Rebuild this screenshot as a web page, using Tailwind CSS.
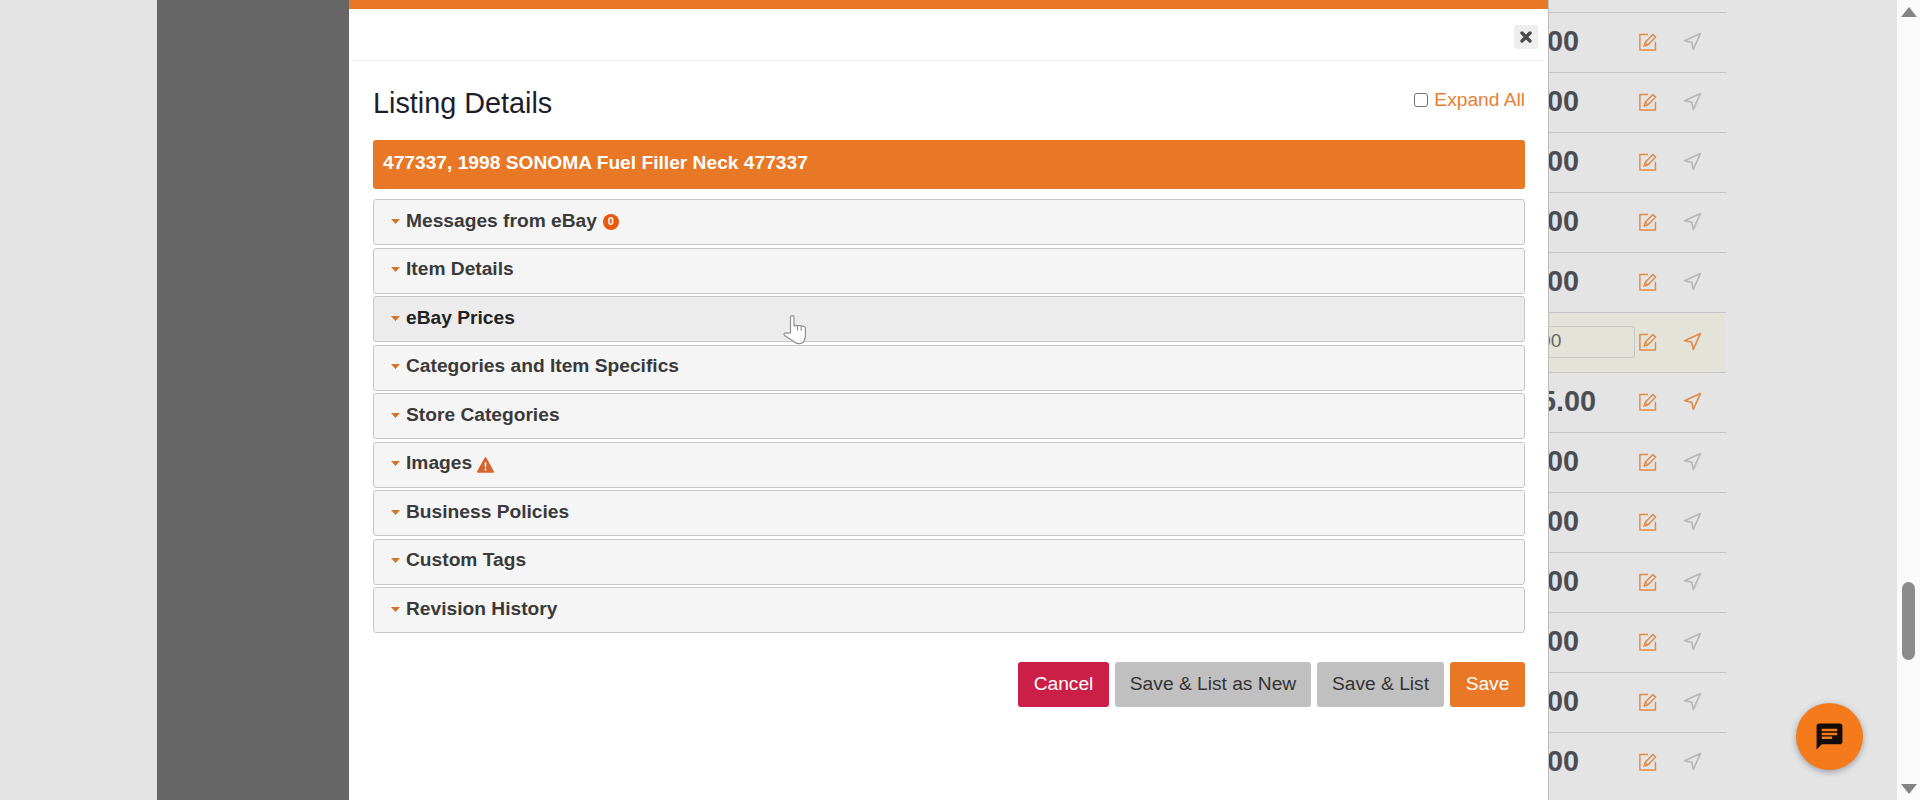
<!DOCTYPE html>
<html lang="en">
<head>
    <meta charset="UTF-8">
    <title>Listing Details</title>
    <script src="https://cdn.jsdelivr.net/npm/@tailwindcss/browser@4"></script>
</head>
<body class="h-[800px] overflow-hidden bg-[#e4e4e4] font-['Liberation_Sans',Arial,sans-serif]">
<div class="relative flex h-[800px] w-[1920px] overflow-hidden">

    <!-- Left page margin and sidebar -->
    <div class="w-[157px] shrink-0 bg-[#e4e4e4]"></div>
    <div class="w-[192px] shrink-0 bg-[#666666]"></div>

    <!-- Modal -->
    <div class="flex w-[1199px] shrink-0 flex-col border-t-[9px] border-[#e87726] bg-white">
        <div class="mx-[4px] flex h-[52px] shrink-0 justify-end border-b border-[#eeeeee] pt-[16px] pr-[6px]">
            <button class="flex h-[24px] w-[24px] items-center justify-center rounded-[3px] bg-[#eeeeee]">
                <svg width="14" height="14" viewBox="0 0 14 14"><path d="M3 3l8 8M11 3l-8 8" stroke="#4d4d4d" stroke-width="3.4" stroke-linecap="round"/></svg>
            </button>
        </div>
        <div class="flex flex-col pr-[23px] pl-[24px]">
            <div class="flex h-[79px] items-start justify-between">
                <h2 class="mt-[26px] text-[28.8px] leading-[32px] text-[#1d1d2b]">Listing Details</h2>
                <label class="mt-[26px] flex items-center gap-[6px] text-[19.2px] leading-[26px] text-[#e87f34]">
                    <span class="h-[14px] w-[14px] rounded-[3px] border border-[#6f6f6f] bg-white"></span>
                    Expand All
                </label>
            </div>
            <div class="flex h-[49px] items-center rounded-[3px] bg-[#e87726] pb-[2px] pl-[10px] text-[19.2px] font-bold text-white">477337, 1998 SONOMA Fuel Filler Neck 477337</div>

            <!-- Accordion -->
            <div class="mt-[10px] flex flex-col gap-[2.5px] text-[19.2px] font-bold text-[#3a3a3a]">
                <div class="flex h-[46px] items-center gap-[6px] rounded-[3px] border border-[#c6c6c6] bg-[#f5f5f5] pb-[1px] pl-[17px]">
                    <svg width="9" height="5" viewBox="0 0 8 5" preserveAspectRatio="none"><path d="M0 0h8L4 5z" fill="#cf7428"/></svg>
                    <span>Messages from eBay</span>
                    <span class="flex h-[16px] w-[16px] items-center justify-center rounded-full bg-[#e8590c] text-[11px] text-white">0</span>
                </div>
                <div class="flex h-[46px] items-center gap-[6px] rounded-[3px] border border-[#c6c6c6] bg-[#f5f5f5] pb-[2px] pl-[17px]">
                    <svg width="9" height="5" viewBox="0 0 8 5" preserveAspectRatio="none"><path d="M0 0h8L4 5z" fill="#cf7428"/></svg>
                    <span>Item Details</span>
                </div>
                <div class="flex h-[46px] items-center gap-[6px] rounded-[3px] border border-[#c6c6c6] bg-[#ececec] pb-[1px] pl-[17px] text-[#222222]">
                    <svg width="9" height="5" viewBox="0 0 8 5" preserveAspectRatio="none"><path d="M0 0h8L4 5z" fill="#cf7428"/></svg>
                    <span>eBay Prices</span>
                </div>
                <div class="flex h-[46px] items-center gap-[6px] rounded-[3px] border border-[#c6c6c6] bg-[#f5f5f5] pb-[2px] pl-[17px]">
                    <svg width="9" height="5" viewBox="0 0 8 5" preserveAspectRatio="none"><path d="M0 0h8L4 5z" fill="#cf7428"/></svg>
                    <span>Categories and Item Specifics</span>
                </div>
                <div class="flex h-[46px] items-center gap-[6px] rounded-[3px] border border-[#c6c6c6] bg-[#f5f5f5] pb-[1px] pl-[17px]">
                    <svg width="9" height="5" viewBox="0 0 8 5" preserveAspectRatio="none"><path d="M0 0h8L4 5z" fill="#cf7428"/></svg>
                    <span>Store Categories</span>
                </div>
                <div class="flex h-[46px] items-center gap-[6px] rounded-[3px] border border-[#c6c6c6] bg-[#f5f5f5] pb-[2px] pl-[17px]">
                    <svg width="9" height="5" viewBox="0 0 8 5" preserveAspectRatio="none"><path d="M0 0h8L4 5z" fill="#cf7428"/></svg>
                    <span>Images</span>
                    <svg class="-ml-[1px] mt-[2px]" width="17" height="16" viewBox="0 0 17 16"><path d="M8.5 1.200L16 14.800H1z" fill="#d4652f" stroke="#d4652f" stroke-width="2" stroke-linejoin="round"/><path d="M7.600 5.500h1.800l-.3 5h-1.200z" fill="#fff"/><circle cx="8.500" cy="12.400" r="1" fill="#fff"/></svg>
                </div>
                <div class="flex h-[46px] items-center gap-[6px] rounded-[3px] border border-[#c6c6c6] bg-[#f5f5f5] pb-[1px] pl-[17px]">
                    <svg width="9" height="5" viewBox="0 0 8 5" preserveAspectRatio="none"><path d="M0 0h8L4 5z" fill="#cf7428"/></svg>
                    <span>Business Policies</span>
                </div>
                <div class="flex h-[46px] items-center gap-[6px] rounded-[3px] border border-[#c6c6c6] bg-[#f5f5f5] pb-[2px] pl-[17px]">
                    <svg width="9" height="5" viewBox="0 0 8 5" preserveAspectRatio="none"><path d="M0 0h8L4 5z" fill="#cf7428"/></svg>
                    <span>Custom Tags</span>
                </div>
                <div class="flex h-[46px] items-center gap-[6px] rounded-[3px] border border-[#c6c6c6] bg-[#f5f5f5] pb-[1px] pl-[17px]">
                    <svg width="9" height="5" viewBox="0 0 8 5" preserveAspectRatio="none"><path d="M0 0h8L4 5z" fill="#cf7428"/></svg>
                    <span>Revision History</span>
                </div>
            </div>

            <!-- Footer buttons -->
            <div class="mt-[29px] flex justify-end gap-[6px] text-[19.2px]">
                <button class="h-[45px] w-[91px] rounded-[3px] bg-[#cb1f47] text-white">Cancel</button>
                <button class="h-[45px] w-[196px] rounded-[3px] bg-[#c0c0c0] text-[#333333]">Save &amp; List as New</button>
                <button class="h-[45px] w-[127px] rounded-[3px] bg-[#c0c0c0] text-[#333333]">Save &amp; List</button>
                <button class="h-[45px] w-[75px] rounded-[3px] bg-[#e87726] text-white">Save</button>
            </div>
        </div>
    </div>

    <!-- Table behind the modal -->
    <div class="flex w-[178px] shrink-0 flex-col border-l border-[#bdbdbd] pt-[12px] text-[28.8px] font-bold text-[#4a4d52]">
        <div class="h-[60px] shrink-0 border-t border-[#c4c4c4]"><div class="flex h-full items-center pb-[2px]"><span class="flex w-[88px] justify-end overflow-hidden pr-[58px] whitespace-nowrap">00</span><svg class="ml-[1px]" width="20" height="20" viewBox="0 0 18 18" fill="none" stroke="#e08a4c" stroke-width="1.3"><path d="M9 2.200H1.700v14h14V8.800"/><path d="M5.600 12.600l.8-3.200 7-7.200 2.400 2.400-7 7.100zM6.400 9.400l2.400 2.400"/></svg><svg class="ml-[25px]" width="19" height="19" viewBox="0 0 24 24" fill="none" stroke="#b5b5b5" stroke-width="2" stroke-linejoin="round"><path d="M2 11L22 2 13 22 11 13z"/></svg></div></div>
        <div class="h-[60px] shrink-0 border-t border-[#c4c4c4]"><div class="flex h-full items-center pb-[2px]"><span class="flex w-[88px] justify-end overflow-hidden pr-[58px] whitespace-nowrap">00</span><svg class="ml-[1px]" width="20" height="20" viewBox="0 0 18 18" fill="none" stroke="#e08a4c" stroke-width="1.3"><path d="M9 2.200H1.700v14h14V8.800"/><path d="M5.600 12.600l.8-3.200 7-7.200 2.400 2.400-7 7.100zM6.400 9.400l2.400 2.400"/></svg><svg class="ml-[25px]" width="19" height="19" viewBox="0 0 24 24" fill="none" stroke="#b5b5b5" stroke-width="2" stroke-linejoin="round"><path d="M2 11L22 2 13 22 11 13z"/></svg></div></div>
        <div class="h-[60px] shrink-0 border-t border-[#c4c4c4]"><div class="flex h-full items-center pb-[2px]"><span class="flex w-[88px] justify-end overflow-hidden pr-[58px] whitespace-nowrap">00</span><svg class="ml-[1px]" width="20" height="20" viewBox="0 0 18 18" fill="none" stroke="#e08a4c" stroke-width="1.3"><path d="M9 2.200H1.700v14h14V8.800"/><path d="M5.600 12.600l.8-3.200 7-7.200 2.400 2.400-7 7.100zM6.400 9.400l2.400 2.400"/></svg><svg class="ml-[25px]" width="19" height="19" viewBox="0 0 24 24" fill="none" stroke="#b5b5b5" stroke-width="2" stroke-linejoin="round"><path d="M2 11L22 2 13 22 11 13z"/></svg></div></div>
        <div class="h-[60px] shrink-0 border-t border-[#c4c4c4]"><div class="flex h-full items-center pb-[2px]"><span class="flex w-[88px] justify-end overflow-hidden pr-[58px] whitespace-nowrap">00</span><svg class="ml-[1px]" width="20" height="20" viewBox="0 0 18 18" fill="none" stroke="#e08a4c" stroke-width="1.3"><path d="M9 2.200H1.700v14h14V8.800"/><path d="M5.600 12.600l.8-3.200 7-7.200 2.400 2.400-7 7.100zM6.400 9.400l2.400 2.400"/></svg><svg class="ml-[25px]" width="19" height="19" viewBox="0 0 24 24" fill="none" stroke="#b5b5b5" stroke-width="2" stroke-linejoin="round"><path d="M2 11L22 2 13 22 11 13z"/></svg></div></div>
        <div class="h-[60px] shrink-0 border-t border-[#c4c4c4]"><div class="flex h-full items-center pb-[2px]"><span class="flex w-[88px] justify-end overflow-hidden pr-[58px] whitespace-nowrap">00</span><svg class="ml-[1px]" width="20" height="20" viewBox="0 0 18 18" fill="none" stroke="#e08a4c" stroke-width="1.3"><path d="M9 2.200H1.700v14h14V8.800"/><path d="M5.600 12.600l.8-3.200 7-7.200 2.400 2.400-7 7.100zM6.400 9.400l2.400 2.400"/></svg><svg class="ml-[25px]" width="19" height="19" viewBox="0 0 24 24" fill="none" stroke="#b5b5b5" stroke-width="2" stroke-linejoin="round"><path d="M2 11L22 2 13 22 11 13z"/></svg></div></div>
        <!-- row being edited -->
        <div class="h-[60px] shrink-0 border-t border-[#c4c4c4] bg-[#e3e3da]"><div class="flex h-full items-center pb-[2px]"><div class="mr-[2px] flex h-[32px] w-[86px] items-center overflow-hidden rounded-r-[3px] border border-l-0 border-[#c6c6c6] text-[19.2px] font-normal text-[#666666]"><span class="-ml-[9px]">00</span></div><svg class="ml-[1px]" width="20" height="20" viewBox="0 0 18 18" fill="none" stroke="#e08a4c" stroke-width="1.3"><path d="M9 2.200H1.700v14h14V8.800"/><path d="M5.600 12.600l.8-3.200 7-7.200 2.400 2.400-7 7.100zM6.400 9.400l2.400 2.400"/></svg><svg class="ml-[25px]" width="19" height="19" viewBox="0 0 24 24" fill="none" stroke="#e08a4c" stroke-width="2" stroke-linejoin="round"><path d="M2 11L22 2 13 22 11 13z"/></svg></div></div>
        <div class="h-[60px] shrink-0 border-t border-[#c4c4c4]"><div class="flex h-full items-center pb-[2px]"><span class="flex w-[88px] justify-end overflow-hidden pr-[41px] whitespace-nowrap">5.00</span><svg class="ml-[1px]" width="20" height="20" viewBox="0 0 18 18" fill="none" stroke="#e08a4c" stroke-width="1.3"><path d="M9 2.200H1.700v14h14V8.800"/><path d="M5.600 12.600l.8-3.200 7-7.200 2.400 2.400-7 7.100zM6.400 9.400l2.400 2.400"/></svg><svg class="ml-[25px]" width="19" height="19" viewBox="0 0 24 24" fill="none" stroke="#e08a4c" stroke-width="2" stroke-linejoin="round"><path d="M2 11L22 2 13 22 11 13z"/></svg></div></div>
        <div class="h-[60px] shrink-0 border-t border-[#c4c4c4]"><div class="flex h-full items-center pb-[2px]"><span class="flex w-[88px] justify-end overflow-hidden pr-[58px] whitespace-nowrap">00</span><svg class="ml-[1px]" width="20" height="20" viewBox="0 0 18 18" fill="none" stroke="#e08a4c" stroke-width="1.3"><path d="M9 2.200H1.700v14h14V8.800"/><path d="M5.600 12.600l.8-3.200 7-7.200 2.400 2.400-7 7.100zM6.400 9.400l2.400 2.400"/></svg><svg class="ml-[25px]" width="19" height="19" viewBox="0 0 24 24" fill="none" stroke="#b5b5b5" stroke-width="2" stroke-linejoin="round"><path d="M2 11L22 2 13 22 11 13z"/></svg></div></div>
        <div class="h-[60px] shrink-0 border-t border-[#c4c4c4]"><div class="flex h-full items-center pb-[2px]"><span class="flex w-[88px] justify-end overflow-hidden pr-[58px] whitespace-nowrap">00</span><svg class="ml-[1px]" width="20" height="20" viewBox="0 0 18 18" fill="none" stroke="#e08a4c" stroke-width="1.3"><path d="M9 2.200H1.700v14h14V8.800"/><path d="M5.600 12.600l.8-3.200 7-7.200 2.400 2.400-7 7.100zM6.400 9.400l2.400 2.400"/></svg><svg class="ml-[25px]" width="19" height="19" viewBox="0 0 24 24" fill="none" stroke="#b5b5b5" stroke-width="2" stroke-linejoin="round"><path d="M2 11L22 2 13 22 11 13z"/></svg></div></div>
        <div class="h-[60px] shrink-0 border-t border-[#c4c4c4]"><div class="flex h-full items-center pb-[2px]"><span class="flex w-[88px] justify-end overflow-hidden pr-[58px] whitespace-nowrap">00</span><svg class="ml-[1px]" width="20" height="20" viewBox="0 0 18 18" fill="none" stroke="#e08a4c" stroke-width="1.3"><path d="M9 2.200H1.700v14h14V8.800"/><path d="M5.600 12.600l.8-3.200 7-7.200 2.400 2.400-7 7.100zM6.400 9.400l2.400 2.400"/></svg><svg class="ml-[25px]" width="19" height="19" viewBox="0 0 24 24" fill="none" stroke="#b5b5b5" stroke-width="2" stroke-linejoin="round"><path d="M2 11L22 2 13 22 11 13z"/></svg></div></div>
        <div class="h-[60px] shrink-0 border-t border-[#c4c4c4]"><div class="flex h-full items-center pb-[2px]"><span class="flex w-[88px] justify-end overflow-hidden pr-[58px] whitespace-nowrap">00</span><svg class="ml-[1px]" width="20" height="20" viewBox="0 0 18 18" fill="none" stroke="#e08a4c" stroke-width="1.3"><path d="M9 2.200H1.700v14h14V8.800"/><path d="M5.600 12.600l.8-3.200 7-7.200 2.400 2.400-7 7.100zM6.400 9.400l2.400 2.400"/></svg><svg class="ml-[25px]" width="19" height="19" viewBox="0 0 24 24" fill="none" stroke="#b5b5b5" stroke-width="2" stroke-linejoin="round"><path d="M2 11L22 2 13 22 11 13z"/></svg></div></div>
        <div class="h-[60px] shrink-0 border-t border-[#c4c4c4]"><div class="flex h-full items-center pb-[2px]"><span class="flex w-[88px] justify-end overflow-hidden pr-[58px] whitespace-nowrap">00</span><svg class="ml-[1px]" width="20" height="20" viewBox="0 0 18 18" fill="none" stroke="#e08a4c" stroke-width="1.3"><path d="M9 2.200H1.700v14h14V8.800"/><path d="M5.600 12.600l.8-3.200 7-7.200 2.400 2.400-7 7.100zM6.400 9.400l2.400 2.400"/></svg><svg class="ml-[25px]" width="19" height="19" viewBox="0 0 24 24" fill="none" stroke="#b5b5b5" stroke-width="2" stroke-linejoin="round"><path d="M2 11L22 2 13 22 11 13z"/></svg></div></div>
        <div class="h-[60px] shrink-0 border-t border-[#c4c4c4]"><div class="flex h-full items-center pb-[2px]"><span class="flex w-[88px] justify-end overflow-hidden pr-[58px] whitespace-nowrap">00</span><svg class="ml-[1px]" width="20" height="20" viewBox="0 0 18 18" fill="none" stroke="#e08a4c" stroke-width="1.3"><path d="M9 2.200H1.700v14h14V8.800"/><path d="M5.600 12.600l.8-3.200 7-7.200 2.400 2.400-7 7.100zM6.400 9.400l2.400 2.400"/></svg><svg class="ml-[25px]" width="19" height="19" viewBox="0 0 24 24" fill="none" stroke="#b5b5b5" stroke-width="2" stroke-linejoin="round"><path d="M2 11L22 2 13 22 11 13z"/></svg></div></div>
    </div>

    <div class="flex-1 bg-[#e4e4e4]"></div>

    <!-- Scrollbar -->
    <div class="relative w-[23px] shrink-0 bg-[#fafafa]">
        <svg class="absolute top-[7px] left-[4px]" width="16" height="10" viewBox="0 0 16 10"><path d="M8 0l8 10H0z" fill="#848484"/></svg>
        <div class="absolute top-[582px] left-[5px] h-[78px] w-[13px] rounded-full bg-[#8c8c8c]"></div>
        <svg class="absolute top-[784px] left-[4px]" width="16" height="10" viewBox="0 0 16 10"><path d="M0 0h16L8 10z" fill="#848484"/></svg>
    </div>

    <!-- Chat launcher -->
    <div class="absolute top-[703px] left-[1796px] flex h-[67px] w-[67px] items-center justify-center rounded-full bg-[#f47a1c] shadow-[0_2px_6px_rgba(60,70,90,0.45)]">
        <svg width="31" height="31" viewBox="0 0 24 24"><path d="M20 2H4c-1.100 0-1.990.9-1.990 2L2 22l4-4h14c1.100 0 2-.9 2-2V4c0-1.100-.9-2-2-2zM6 9h12v2H6V9zm8 5H6v-2h8v2zm4-6H6V6h12v2z" fill="#140c08"/></svg>
    </div>

    <!-- Mouse pointer -->
    <svg class="absolute top-[314px] left-[783px]" width="25" height="32" viewBox="0 0 25 32" fill="#fff" stroke="#8f8f8f" stroke-width="1.200" stroke-linejoin="round"><path d="M7.500 19V3.200C7.500 1 11 1 11 3.200V12l2.700-.6 1 .3 2.600-.2 1 .5 2.300.1c1.200.2 1.800 1 1.800 2.200v7.500c0 1.800-.5 3-1 4.400-.5 1.800-1.800 2.900-3.500 3.200-3.100.6-5.500-.1-7-1.900L1.500 21.500c-1.300-1.500.3-3.300 2-2.300z"/><path d="M14.500 11.600v5M18.200 11.700v5" fill="none"/></svg>
</div>
</body>
</html>
